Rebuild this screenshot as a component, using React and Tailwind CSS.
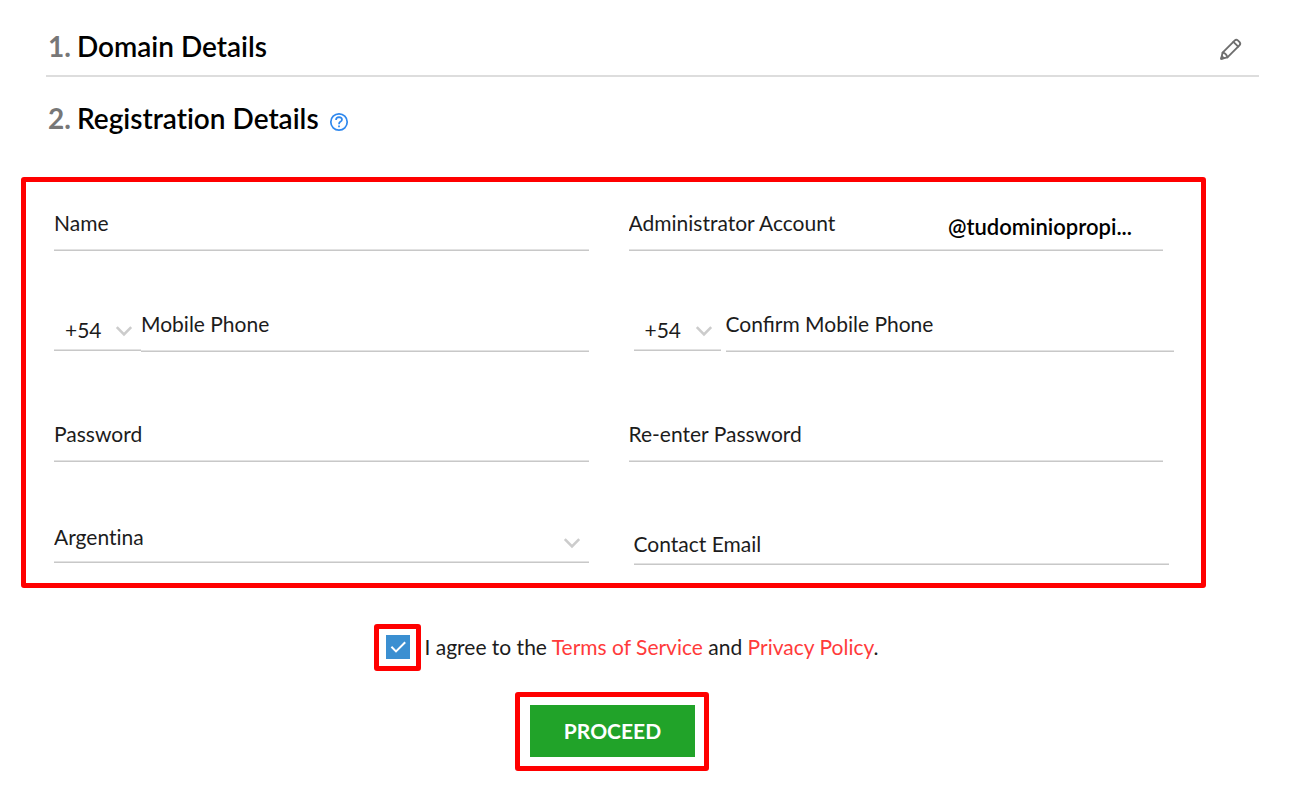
import React, { useState } from 'react'

// Icons
function PencilIcon() {
  return (
    <svg className="h-6 w-6" viewBox="0 0 24 24" fill="none" stroke="#6f6f6f" strokeWidth="1.9" strokeLinejoin="round" strokeLinecap="round">
      <path d="M2.2 21.8L3.6 15.6L15.6 3.6Q17.2 2 18.8 3.4L20.6 5.2Q22 6.8 20.4 8.4L8.4 20.4Z" />
      <path d="M14.4 4.8L19.2 9.6" />
      <path d="M3.6 15.6Q7.4 16.2 8.4 20.4" />
      <path d="M2.2 21.8L3 19.4L4.6 21Z" />
    </svg>
  )
}

function HelpIcon() {
  return (
    <svg className="h-5 w-5" viewBox="0 0 20 20" fill="none" stroke="#2f88ee" strokeWidth="1.7">
      <circle cx="10" cy="10" r="8.2" />
      <path d="M7 8Q7.1 5.2 10 5.2Q13 5.3 13 7.7Q12.9 8.9 11.3 9.8Q10 10.6 10 12.2" />
      <path d="M10 13.4V15.2" />
    </svg>
  )
}

function Chevron() {
  return (
    <svg className="pointer-events-none absolute right-2 bottom-[10px] h-5 w-[18px]" viewBox="0 0 18 20" fill="none" stroke="#cccccc" strokeWidth="2.6">
      <path d="M1.8 6.2L9 13.4L16.2 6.2" />
    </svg>
  )
}

const line = 'border-b border-[#c8c8c8] shadow-[inset_0_-1px_#e2e2e2]'

// Text input with an underline
function Field({ label, type = 'text', className = 'pb-[14px]' }) {
  return (
    <input
      type={type}
      aria-label={label}
      placeholder={label}
      className={`block w-full min-w-0 bg-transparent text-[21px] leading-[26px] placeholder:text-[#1c1c1c] outline-none ${line} ${className}`}
    />
  )
}

// Select with an underline and a chevron
function SelectField({ label, options, className }) {
  return (
    <div className="relative">
      <select
        aria-label={label}
        className={`block w-full appearance-none bg-transparent text-[21px] leading-[26px] outline-none [font-variant-ligatures:none] ${line} ${className}`}
      >
        {options.map((option) => (
          <option key={option}>{option}</option>
        ))}
      </select>
      <Chevron />
    </div>
  )
}

function PhoneField({ label, className = '' }) {
  return (
    <div className={`flex items-start ${className}`}>
      <div className="w-[87px] shrink-0">
        <SelectField label={`${label} country code`} options={['+54']} className="pt-[6px] pb-[7px] pl-[11px]" />
      </div>
      <Field label={label} type="tel" />
    </div>
  )
}

function SectionTitle({ number, children }) {
  return (
    <h2 className="flex gap-[6px] text-[28px] leading-9 font-semibold text-black [font-variant-ligatures:none]">
      <span className="font-bold text-[#777777]">{number}.</span>
      <span>{children}</span>
    </h2>
  )
}

export default function App() {
  const [agreed, setAgreed] = useState(true)

  return (
    <main className="bg-white pt-7 pb-[14px] font-['Lato',sans-serif] text-[21px] leading-[26px] text-[#1c1c1c]">
      <section className="mr-[39px] ml-[46px] flex items-start justify-between border-b-2 border-[#dddddd] pr-4 pb-[11px] pl-0.5">
        <SectionTitle number={1}>Domain Details</SectionTitle>
        <button type="button" aria-label="Edit domain details" className="mt-[9px]">
          <PencilIcon />
        </button>
      </section>

      <div className="mt-[23px] ml-12 flex items-center gap-[10px]">
        <SectionTitle number={2}>Registration Details</SectionTitle>
        <button type="button" aria-label="Help" className="mt-2">
          <HelpIcon />
        </button>
      </div>

      <form className="mt-[41px] mr-[92px] ml-[21px]" onSubmit={(e) => e.preventDefault()}>
        <div className="rounded-[3px] border-[5px] border-[#ff0000] pt-7 pr-[38px] pb-[18px] pl-7">
          <div className="grid grid-cols-2 items-start gap-x-10">
            <Field label="Name" />
            <div className={`flex items-start ${line}`}>
              <input
                type="text"
                aria-label="Administrator Account"
                placeholder="Administrator Account"
                className="min-w-0 flex-1 bg-transparent pb-[14px] outline-none placeholder:text-[#1c1c1c]"
              />
              <span className="mr-[31px] pt-1 text-[22px] font-semibold text-black">@tudominiopropi...</span>
            </div>
          </div>

          <div className="mt-[60px] grid grid-cols-2 items-start gap-x-10">
            <PhoneField label="Mobile Phone" />
            <PhoneField label="Confirm Mobile Phone" className="-mr-[11px] ml-[5px] gap-[5px]" />
          </div>

          <div className="mt-[69px] grid grid-cols-2 items-start gap-x-10">
            <Field label="Password" type="password" />
            <Field label="Re-enter Password" type="password" />
          </div>

          <div className="mt-[62px] grid grid-cols-2 items-start gap-x-10">
            <SelectField label="Country" options={['Argentina']} className="pb-3" />
            <div className="-mr-[6px] ml-[5px]">
              <Field label="Contact Email" type="email" className="pt-[7px] pb-[7px]" />
            </div>
          </div>
        </div>

        <div className="mt-9 flex items-center justify-center gap-[3px] pl-[26px]">
          <div className="rounded-[3px] border-[5px] border-[#ff0000] pt-[6px] pr-[6px] pb-[7px] pl-[7px]">
            <div className="relative">
              <input
                id="agree"
                type="checkbox"
                checked={agreed}
                onChange={(e) => setAgreed(e.target.checked)}
                className="block h-6 w-6 appearance-none border border-[#3b8fd1] checked:bg-[#3b8fd1]"
              />
              {agreed && (
                <svg className="pointer-events-none absolute inset-0 h-6 w-6" viewBox="0 0 24 24" fill="none" stroke="white" strokeWidth="2">
                  <path d="M5.4 11.8L10 16.4L19.2 7.2" />
                </svg>
              )}
            </div>
          </div>
          <p className="pb-0.5">
            <label htmlFor="agree">I agree to the</label>{' '}
            <a href="#terms" className="text-[#ff3b3b]">Terms of Service</a> and{' '}
            <a href="#privacy" className="text-[#ff3b3b]">Privacy Policy</a>.
          </p>
        </div>

        <div className="mt-[21px] flex justify-center pr-[3px]">
          <div className="rounded-[3px] border-[5px] border-[#ff0000] pt-2 pr-[9px] pb-[9px] pl-[10px]">
            <button type="submit" className="block h-[52px] w-[165px] bg-[#21a329] font-bold text-white">
              PROCEED
            </button>
          </div>
        </div>
      </form>
    </main>
  )
}
